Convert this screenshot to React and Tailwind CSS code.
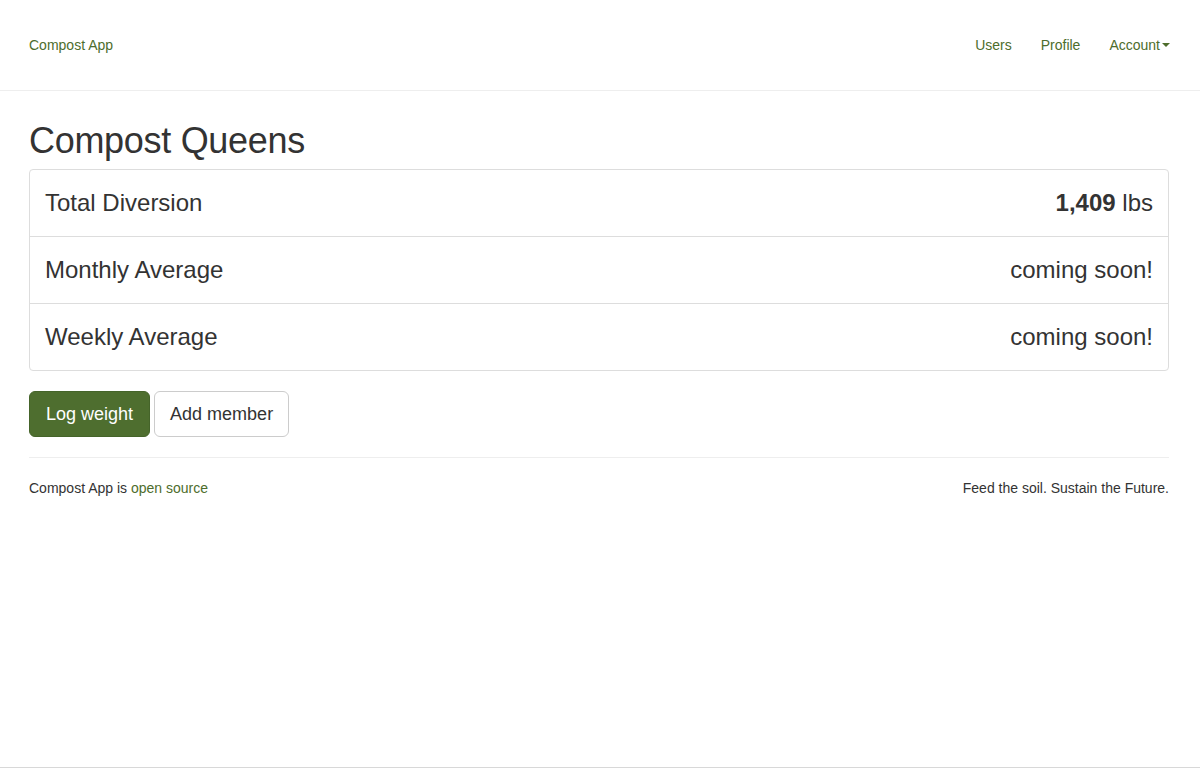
export default function App() {
  const rows = [
    { label: "Total Diversion", value: <span><b className="font-bold">1,409</b> lbs</span> },
    { label: "Monthly Average", value: "coming soon!" },
    { label: "Weekly Average", value: "coming soon!" },
  ];
  return (
    <div className="h-[768px] border-b border-[#d8d8d8] bg-white text-[#333] text-[14px] leading-[20px]" style={{ fontFamily: '"Liberation Sans", Arial, sans-serif' }}>
      <nav className="h-[91px] border-b border-[#eeeeee] px-[29px] flex items-center justify-between">
        <a className="text-[#4d6d2c] text-[14px]">Compost App</a>
        <div className="flex items-center gap-[29px] pr-[1px]">
          <a className="text-[#4d6d2c]">Users</a>
          <a className="text-[#4d6d2c]">Profile</a>
          <a className="text-[#4d6d2c] flex items-center">
            Account
            <span className="ml-[2px] inline-block w-0 h-0 border-l-[4px] border-r-[4px] border-t-[4px] border-l-transparent border-r-transparent border-t-[#4d6d2c]"></span>
          </a>
        </div>
      </nav>
      <main className="px-[29px] pr-[31px]">
        <h1 className="mt-[30px] mb-[8px] text-[36px] leading-[40px] font-normal text-[#333] tracking-[-0.3px]">Compost Queens</h1>
        <div className="border border-[#dddddd] rounded-[4px]">
          {rows.map((r, i) => (
            <div key={i} className={"flex justify-between items-center px-[15px] py-[16px] text-[24px] leading-[34px] " + (i > 0 ? "border-t border-[#dddddd]" : "")}>
              <span>{r.label}</span>
              <span>{r.value}</span>
            </div>
          ))}
        </div>
        <div className="mt-[20px] flex gap-[4px]">
          <button className="h-[46px] px-[16px] rounded-[6px] bg-[#4e6e2f] border border-[#45642a] text-white text-[18px]">Log weight</button>
          <button className="h-[46px] px-[15px] rounded-[6px] bg-white border border-[#cccccc] text-[#333] text-[18px]">Add member</button>
        </div>
        <hr className="mt-[20px] border-t border-[#eeeeee]" />
        <footer className="mt-[20px] flex justify-between text-[14px] leading-[20px]">
          <span>Compost App is <a className="text-[#4d6d2c]">open source</a></span>
          <span>Feed the soil. Sustain the Future.</span>
        </footer>
      </main>
    </div>
  );
}
